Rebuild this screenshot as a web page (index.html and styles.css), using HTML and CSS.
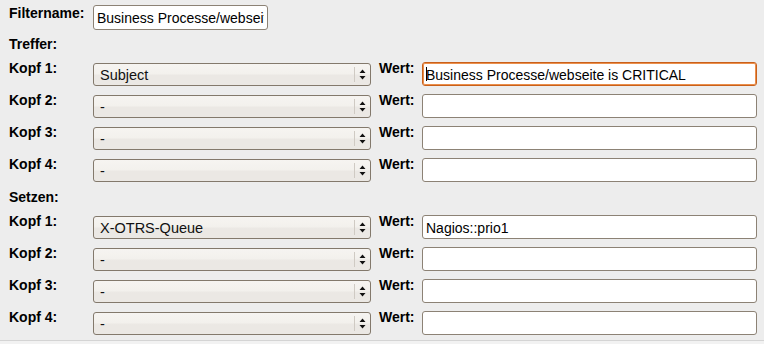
FILE: index.html
```html
<!DOCTYPE html>
<html lang="de">
<head>
  <meta charset="UTF-8">
  <title>Filter</title>
  <link rel="stylesheet" href="styles.css">
</head>
<body>

<form class="filter">
  <div class="name-row">
    <label class="lbl name-lbl" for="name">Filtername:</label>
    <input class="txt name-txt" type="text" id="name" value="Business Processe/webseite is CRITICAL">
  </div>

  <div class="section">Treffer:</div>
  <div class="rows">
    <label class="lbl">Kopf 1:</label>
    <div class="sel"><select><option>Subject</option></select><svg class="arr" width="7" height="11" viewBox="0 0 7 11"><path d="M3.5 0.5 L6.5 4 L0.5 4 Z M0.5 7 L6.5 7 L3.5 10.5 Z" fill="#111"/></svg></div>
    <label class="lbl wert">Wert:</label>
    <div class="txt-wrap"><input class="txt focus" type="text" value="Business Processe/webseite is CRITICAL"><span class="caret"></span></div>

    <label class="lbl">Kopf 2:</label>
    <div class="sel"><select><option>-</option></select><svg class="arr" width="7" height="11" viewBox="0 0 7 11"><path d="M3.5 0.5 L6.5 4 L0.5 4 Z M0.5 7 L6.5 7 L3.5 10.5 Z" fill="#111"/></svg></div>
    <label class="lbl wert">Wert:</label>
    <input class="txt" type="text" value="">

    <label class="lbl">Kopf 3:</label>
    <div class="sel"><select><option>-</option></select><svg class="arr" width="7" height="11" viewBox="0 0 7 11"><path d="M3.5 0.5 L6.5 4 L0.5 4 Z M0.5 7 L6.5 7 L3.5 10.5 Z" fill="#111"/></svg></div>
    <label class="lbl wert">Wert:</label>
    <input class="txt" type="text" value="">

    <label class="lbl">Kopf 4:</label>
    <div class="sel"><select><option>-</option></select><svg class="arr" width="7" height="11" viewBox="0 0 7 11"><path d="M3.5 0.5 L6.5 4 L0.5 4 Z M0.5 7 L6.5 7 L3.5 10.5 Z" fill="#111"/></svg></div>
    <label class="lbl wert">Wert:</label>
    <input class="txt" type="text" value="">
  </div>

  <div class="section">Setzen:</div>
  <div class="rows">
    <label class="lbl">Kopf 1:</label>
    <div class="sel"><select><option>X-OTRS-Queue</option></select><svg class="arr" width="7" height="11" viewBox="0 0 7 11"><path d="M3.5 0.5 L6.5 4 L0.5 4 Z M0.5 7 L6.5 7 L3.5 10.5 Z" fill="#111"/></svg></div>
    <label class="lbl wert">Wert:</label>
    <input class="txt" type="text" value="Nagios::prio1">

    <label class="lbl">Kopf 2:</label>
    <div class="sel"><select><option>-</option></select><svg class="arr" width="7" height="11" viewBox="0 0 7 11"><path d="M3.5 0.5 L6.5 4 L0.5 4 Z M0.5 7 L6.5 7 L3.5 10.5 Z" fill="#111"/></svg></div>
    <label class="lbl wert">Wert:</label>
    <input class="txt" type="text" value="">

    <label class="lbl">Kopf 3:</label>
    <div class="sel"><select><option>-</option></select><svg class="arr" width="7" height="11" viewBox="0 0 7 11"><path d="M3.5 0.5 L6.5 4 L0.5 4 Z M0.5 7 L6.5 7 L3.5 10.5 Z" fill="#111"/></svg></div>
    <label class="lbl wert">Wert:</label>
    <input class="txt" type="text" value="">

    <label class="lbl">Kopf 4:</label>
    <div class="sel"><select><option>-</option></select><svg class="arr" width="7" height="11" viewBox="0 0 7 11"><path d="M3.5 0.5 L6.5 4 L0.5 4 Z M0.5 7 L6.5 7 L3.5 10.5 Z" fill="#111"/></svg></div>
    <label class="lbl wert">Wert:</label>
    <input class="txt" type="text" value="">
  </div>
</form>

</body>
</html>
```

FILE: styles.css
```css
html, body { margin: 0; padding: 0; background: #f2f2f2; }
body { font-family: "Liberation Sans", Arial, sans-serif; font-size: 14px; color: #000; }

.filter { background: #ededed; height: 341px; border-bottom: 1px solid #d4d4d4; padding: 5px 7px 0 9px; box-sizing: border-box; }

.lbl { font-weight: bold; line-height: 15px; display: block; }
.rows .lbl { margin-top: -1px; }

.name-row { display: flex; align-items: flex-start; height: 25px; }
.name-lbl { width: 84px; padding-top: 1px; }

.section { font-weight: bold; line-height: 15px; margin-top: 7px; }

.rows { display: grid; grid-template-columns: 84px 278px 51px 335px; grid-auto-rows: 24px; row-gap: 8px; margin: 10px 0 8px; align-items: start; }
.wert { padding-left: 8px; }

.txt { box-sizing: border-box; height: 24px; width: 100%; margin: 0; padding: 1px 3px 0; border: 1px solid #8c8275; border-radius: 3px; background: #fff; font-family: "Liberation Sans", Arial, sans-serif; font-size: 14px; color: #000; outline: none; }
.name-row .txt { height: 25px; width: 175px; }
.txt.focus { border-color: #c9601a; box-shadow: inset 0 0 0 1px #eb8f4c; }

.txt-wrap { position: relative; }
.caret { position: absolute; left: 4px; top: 5px; width: 1px; height: 14px; background: #000; }

.sel { position: relative; height: 23px; margin-top: 1px; }
.sel select { appearance: none; -webkit-appearance: none; box-sizing: border-box; width: 100%; height: 23px; margin: 0; padding: 1px 20px 0 6px; border: 1px solid #83796c; border-radius: 3px; background: linear-gradient(#f6f4f1, #f3f1ed 45%, #ebe8e4 55%, #ebe8e4); font-family: "Liberation Sans", Arial, sans-serif; font-size: 14.5px; color: #111; outline: none; }
.sel::after { content: ""; position: absolute; right: 16px; top: 4px; bottom: 4px; width: 1px; background: #cfcac3; }
.arr { position: absolute; right: 5px; top: 6px; }
```
